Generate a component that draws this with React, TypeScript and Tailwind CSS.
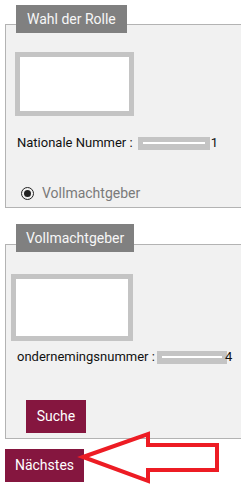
export default function App() {
  return (
    <div className="relative h-[487px] w-[241px] overflow-hidden bg-white font-['Roboto',sans-serif]">
      {/* Wahl der Rolle */}
      <div className="pt-[5px]">
        <div className="relative z-10 ml-[16px] inline-block h-[28px] bg-[#808080] px-[11px] text-[14px] leading-[28px] text-[#f7f7f7]">
          Wahl der Rolle
        </div>
        <div className="-mt-[9px] ml-[5px] h-[184px] w-[260px] border border-[#b3b3b3] bg-[#f1f1f1] pt-[27px]">
          <div className="ml-[9px] h-[64px] w-[119px] border-[5px] border-[#c4c4c4] bg-white" />
          <div className="mt-[19px] ml-[11px] flex h-[16px] items-center text-[13px] text-[#111]">
            <span>Nationale Nummer :</span>
            <span className="ml-[5px] flex h-[13px] w-[72px] items-center bg-[#c4c4c4] px-[5px]">
              <span className="h-[2px] w-full bg-white" />
            </span>
            <span className="ml-[1px]">1</span>
          </div>
          <div className="mt-[33px] ml-[15px] flex h-[18px] items-center">
            <span className="flex h-[13px] w-[13px] items-center justify-center rounded-full border border-[#222]">
              <span className="h-[7px] w-[7px] rounded-full bg-[#222]" />
            </span>
            <span className="ml-[8px] text-[14px] text-[#7a7a7a]">Vollmachtgeber</span>
          </div>
        </div>
      </div>

      {/* Vollmachtgeber */}
      <div className="mt-[16px]">
        <div className="relative z-10 ml-[16px] inline-block h-[28px] bg-[#808080] px-[10px] text-[14px] leading-[28px] text-[#f7f7f7]">
          Vollmachtgeber
        </div>
        <div className="-mt-[8px] ml-[5px] h-[195px] w-[260px] border border-[#b3b3b3] bg-[#f1f1f1] pt-[29px]">
          <div className="ml-[5px] h-[67px] w-[122px] border-[5px] border-[#c4c4c4] bg-white" />
          <div className="mt-[8px] ml-[11px] flex h-[16px] items-center text-[13px] text-[#111]">
            <span>ondernemingsnummer :</span>
            <span className="ml-[2px] flex h-[13px] w-[70px] items-center bg-[#c4c4c4] px-[5px]">
              <span className="h-[2px] w-full bg-white" />
            </span>
            <span className="-ml-[2px]">4</span>
          </div>
          <button className="mt-[35px] ml-[20px] h-[33px] w-[60px] bg-[#85163f] text-[14px] text-white">
            Suche
          </button>
        </div>
      </div>

      <button className="mt-[10px] ml-[5px] h-[33px] w-[79px] bg-[#85163f] text-[14px] text-white">
        Nächstes
      </button>

      {/* roter Pfeil */}
      <svg className="pointer-events-none absolute inset-0" width="241" height="487" viewBox="0 0 241 487">
        <polygon
          points="83,457 148,434 148,445 217,445 217,470 148,470 148,481"
          fill="none"
          stroke="#ed1c24"
          strokeWidth="4"
          strokeLinejoin="miter"
        />
      </svg>
    </div>
  )
}
